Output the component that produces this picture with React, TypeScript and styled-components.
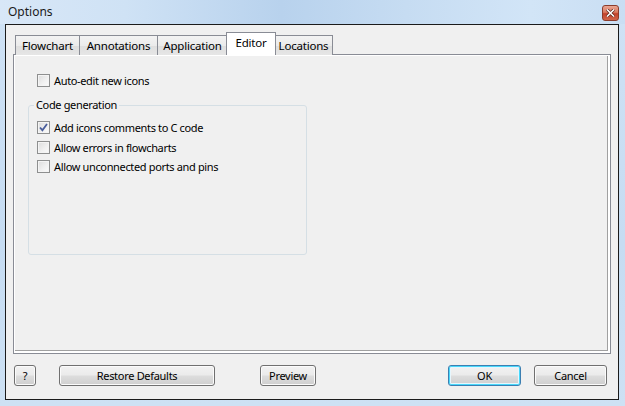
import React from "react";
import styled, { createGlobalStyle, css } from "styled-components";

const GlobalStyle = createGlobalStyle`
  html, body {
    margin: 0;
    padding: 0;
    background: #ffffff;
  }
  body {
    font-family: "Noto Sans", "Liberation Sans", sans-serif;
    font-size: 11px;
    color: #000000;
  }
`;

const Window = styled.div`
  width: 625px;
  height: 406px;
  box-sizing: border-box;
  display: flex;
  flex-direction: column;
  padding: 0 6px 6px 5px;
  background: linear-gradient(180deg, #cfe2f5 0%, #c6dcf2 60%, #cde1f4 100%);
  overflow: hidden;
`;

const TitleBar = styled.div`
  height: 24px;
  margin: 0 -6px 0 -5px;
  padding: 0 6px 0 8px;
  display: flex;
  align-items: center;
  justify-content: space-between;
  background: linear-gradient(
    90deg,
    #d8e7f7 0%,
    #cfe2f5 20%,
    #b8d2ed 45%,
    #c6dcf2 65%,
    #d2e5f7 85%,
    #c9def3 100%
  );
`;

const Title = styled.span`
  font-size: 12px;
  color: #1a1a1a;
  padding-bottom: 1px;
`;

const CloseButton = styled.div`
  width: 17px;
  height: 16px;
  margin-top: 1px;
  box-sizing: border-box;
  border: 1px solid #8b3c2c;
  border-radius: 3px;
  background: linear-gradient(180deg, #eaa693 0%, #d9785f 45%, #c2422b 55%, #d0654a 100%);
  display: flex;
  align-items: center;
  justify-content: center;
`;

const Client = styled.div`
  flex: 1;
  border: 1px solid #1b1b1b;
  background: #f0f0f0;
  display: flex;
  flex-direction: column;
  padding: 8px 7px 13px 7px;
`;

const TabStrip = styled.div`
  display: flex;
  align-items: flex-end;
  height: 22px;
  padding-left: 2px;
  position: relative;
  z-index: 1;
  margin-bottom: -1px;
`;

const Tab = styled.div<{ $w: number; $active?: boolean }>`
  width: ${(p) => p.$w}px;
  box-sizing: border-box;
  height: 20px;
  border: 1px solid #898c95;
  border-bottom: none;
  margin-right: -1px;
  display: flex;
  align-items: center;
  justify-content: center;
  font-size: 11.5px;
  letter-spacing: -0.2px;
  color: #000;
  background: linear-gradient(180deg, #f3f3f3 0%, #ebebeb 50%, #dedede 51%, #e6e6e6 100%);
  ${(p) =>
    p.$active &&
    css`
      height: 23px;
      background: #ffffff;
      margin-left: -1px;
      margin-right: -2px;
      padding-bottom: 3px;
      position: relative;
      z-index: 2;
    `}
`;

const Panel = styled.div`
  flex: 1;
  border: 1px solid #898c95;
  background: #ffffff;
  padding: 1px;
  display: flex;
`;

const Page = styled.div`
  flex: 1;
  background: #f0f0f0;
  border-right: 1px solid #a0a0a0;
  border-bottom: 1px solid #a0a0a0;
  margin: 0 1px 1px 0;
  padding: 18px 0 0 22px;
  display: flex;
  flex-direction: column;
`;

const Row = styled.label<{ $mb?: number }>`
  display: flex;
  align-items: center;
  height: 13px;
  gap: 4px;
  margin-bottom: ${(p) => p.$mb ?? 0}px;
`;

const Box = styled.span`
  width: 13px;
  height: 13px;
  box-sizing: border-box;
  border: 1px solid #8e8f8f;
  background: linear-gradient(135deg, #dcdcdc 0%, #f1f1f1 60%, #fbfbfb 100%);
  box-shadow: inset 0 0 0 1px #f4f4f4;
  display: flex;
  align-items: center;
  justify-content: center;
  flex-shrink: 0;
`;

const RowText = styled.span`
  font-size: 11px;
  letter-spacing: -0.35px;
  line-height: 13px;
  white-space: nowrap;
`;

const Group = styled.fieldset`
  width: 279px;
  height: 157px;
  box-sizing: border-box;
  margin: 0 0 0 -9px;
  padding: 9px 0 0 8px;
  border: 1px solid #d5dfe5;
  border-radius: 3px;
  display: flex;
  flex-direction: column;
  gap: 6.5px;
`;

const Legend = styled.legend`
  font-size: 11px;
  letter-spacing: -0.35px;
  padding: 0 2px 0 2px;
  margin-left: -3px;
  line-height: 14px;
`;

const ButtonRow = styled.div`
  display: flex;
  align-items: center;
  margin: 11px 4px 0 1px;
`;

const Button = styled.button<{ $w: number; $ml?: number; $default?: boolean }>`
  width: ${(p) => p.$w}px;
  height: 21px;
  margin-left: ${(p) => p.$ml ?? 0}px;
  box-sizing: border-box;
  border: 1px solid #707070;
  border-radius: 3px;
  background: linear-gradient(180deg, #f2f2f2 0%, #ebebeb 48%, #dddddd 52%, #cfcfcf 100%);
  box-shadow: inset 0 0 0 1px #fbfbfb;
  font-family: "Noto Sans", "Liberation Sans", sans-serif;
  font-size: 11px;
  letter-spacing: -0.3px;
  color: #000;
  padding: 0 0 1px;
  ${(p) =>
    p.$default &&
    css`
      border-color: #3c7fb1;
      box-shadow: inset 0 0 0 1px #48d8fb, inset 0 0 0 2px #e6f6fd;
    `}
`;

const Spacer = styled.div`
  flex: 1;
`;

const Check: React.FC<{ checked?: boolean }> = ({ checked }) => (
  <Box>
    {checked && (
      <svg width="11" height="11" viewBox="0 0 11 11">
        <path d="M2 5.5 L4.4 8.2 L9 2" fill="none" stroke="#4a5e9c" strokeWidth="1.8" />
      </svg>
    )}
  </Box>
);

const tabs = [
  { name: "Flowchart", w: 65 },
  { name: "Annotations", w: 79 },
  { name: "Application", w: 71 },
  { name: "Editor", w: 50, active: true },
  { name: "Locations", w: 59 },
];

export default function App() {
  return (
    <>
      <GlobalStyle />
      <Window>
        <TitleBar>
          <Title>Options</Title>
          <CloseButton>
            <svg width="9" height="8" viewBox="0 0 9 8">
              <path d="M1 0.5 L8 7.5 M8 0.5 L1 7.5" stroke="#5a1f16" strokeWidth="3" />
              <path d="M1 0.5 L8 7.5 M8 0.5 L1 7.5" stroke="#ffffff" strokeWidth="1.6" />
            </svg>
          </CloseButton>
        </TitleBar>
        <Client>
          <TabStrip>
            {tabs.map((t) => (
              <Tab key={t.name} $w={t.w} $active={t.active}>
                {t.name}
              </Tab>
            ))}
          </TabStrip>
          <Panel>
            <Page>
              <Row $mb={11}>
                <Check />
                <RowText>Auto-edit new icons</RowText>
              </Row>
              <Group>
                <Legend>Code generation</Legend>
                <Row>
                  <Check checked />
                  <RowText>Add icons comments to C code</RowText>
                </Row>
                <Row>
                  <Check />
                  <RowText>Allow errors in flowcharts</RowText>
                </Row>
                <Row>
                  <Check />
                  <RowText>Allow unconnected ports and pins</RowText>
                </Row>
              </Group>
            </Page>
          </Panel>
          <ButtonRow>
            <Button $w={22}>?</Button>
            <Button $w={156} $ml={23}>Restore Defaults</Button>
            <Button $w={56} $ml={45}>Preview</Button>
            <Spacer />
            <Button $w={73} $default>OK</Button>
            <Button $w={73} $ml={13}>Cancel</Button>
          </ButtonRow>
        </Client>
      </Window>
    </>
  );
}
